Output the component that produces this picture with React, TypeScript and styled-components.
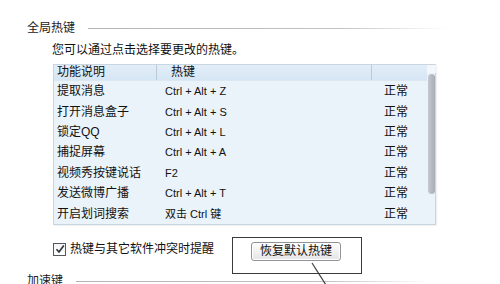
import React from "react";
import styled, { createGlobalStyle } from "styled-components";

const Global = createGlobalStyle`
  html, body { margin: 0; padding: 0; background: #ffffff; }
  body {
    font-family: "Liberation Sans", "Noto Sans CJK SC", sans-serif;
    font-size: 12px;
    color: #111111;
  }
`;

const Page = styled.div`
  position: relative;
  width: 500px;
  height: 284px;
  overflow: hidden;
  background: #ffffff;
  display: flex;
  flex-direction: column;
`;

const SectionHeader = styled.div<{ $top: number }>`
  display: flex;
  align-items: center;
  margin-top: ${(p) => p.$top}px;
  padding-left: 27px;
  height: 14px;
  line-height: 14px;
  flex: none;
`;

const SectionTitle = styled.span<{ $width: number }>`
  width: ${(p) => p.$width}px;
  color: #222222;
  font-size: 12px;
  white-space: nowrap;
  flex: none;
`;

const SectionLine = styled.div<{ $width: number }>`
  width: ${(p) => p.$width}px;
  height: 1px;
  background: linear-gradient(to right, #b4b4b4 0%, #c2c2c2 70%, rgba(210, 210, 210, 0) 100%);
  flex: none;
`;

const Hint = styled.div`
  margin-top: 8px;
  padding-left: 52px;
  height: 14px;
  line-height: 14px;
  font-size: 12px;
  color: #111111;
  flex: none;
`;

const ListBox = styled.div`
  margin-top: 7px;
  margin-left: 53px;
  width: 383px;
  height: 161px;
  box-sizing: border-box;
  border: 1px solid #c8d6e2;
  background: #eaf3fa;
  display: flex;
  flex: none;
  box-shadow: 1px 1px 1px rgba(0, 0, 0, 0.06);
`;

const ListMain = styled.div`
  flex: 1;
  display: flex;
  flex-direction: column;
`;

const Columns = styled.div`
  display: grid;
  grid-template-columns: 103px 215px 55px;
  align-items: center;
`;

const HeaderRow = styled(Columns)`
  height: 15px;
  background: linear-gradient(#e2eef8, #d6e6f4);
  border-bottom: 1px solid #dbe7f1;
`;

const HeaderCell = styled.div<{ $sep?: boolean; $pad: number }>`
  height: 15px;
  line-height: 15px;
  padding-left: ${(p) => p.$pad}px;
  box-sizing: border-box;
  border-right: ${(p) => (p.$sep ? "1px solid #b9cad8" : "none")};
  color: #111111;
  white-space: nowrap;
`;

const Row = styled(Columns)`
  height: 20.57px;
`;

const Cell = styled.div<{ $pad: number; $latin?: boolean }>`
  padding-left: ${(p) => p.$pad}px;
  line-height: 20px;
  white-space: nowrap;
  color: #111111;
  font-size: ${(p) => (p.$latin ? "11px" : "12px")};
`;

const ScrollTrack = styled.div`
  width: 9px;
  display: flex;
  flex-direction: column;
  align-items: center;
  flex: none;
`;

const ScrollCap = styled.div`
  width: 9px;
  height: 8px;
  background: #f3f7fb;
  flex: none;
`;

const ScrollThumb = styled.div`
  margin-top: 1px;
  width: 7px;
  height: 120px;
  border-radius: 4px;
  background: linear-gradient(to right, #c6c9cf, #b3b7bf 60%, #a9adb5);
`;

const Footer = styled.div`
  margin-top: 12px;
  padding-left: 53px;
  height: 37px;
  display: flex;
  align-items: flex-start;
  flex: none;
`;

const CheckLabel = styled.label`
  margin-top: 5px;
  width: 179px;
  display: flex;
  align-items: center;
  gap: 4px;
  height: 14px;
  line-height: 14px;
  font-size: 12px;
  color: #111111;
  white-space: nowrap;
  flex: none;
`;

const CheckBox = styled.span`
  width: 11px;
  height: 11px;
  border: 1px solid #55595f;
  background: linear-gradient(#f4f4f4, #ffffff);
  display: flex;
  align-items: center;
  justify-content: center;
  flex: none;
`;

const Annotation = styled.div`
  width: 130px;
  height: 37px;
  box-sizing: border-box;
  border: 1.5px solid #3a3a3a;
  padding: 4px 0 0 18px;
  flex: none;
`;

const Button = styled.button`
  width: 90px;
  height: 19px;
  padding: 0;
  border: 1px solid #8f9296;
  border-radius: 3px;
  background: linear-gradient(#fefefe, #f0f0f0 55%, #e4e4e4);
  font-family: "Liberation Sans", "Noto Sans CJK SC", sans-serif;
  font-size: 12px;
  color: #111111;
  line-height: 17px;
  box-shadow: inset 0 0 0 1px #ffffff;
`;

const Pointer = styled.svg`
  position: absolute;
  left: 308px;
  top: 260px;
`;

const rows: [string, string][] = [
  ["提取消息", "Ctrl + Alt + Z"],
  ["打开消息盒子", "Ctrl + Alt + S"],
  ["锁定QQ", "Ctrl + Alt + L"],
  ["捕捉屏幕", "Ctrl + Alt + A"],
  ["视频秀按键说话", "F2"],
  ["发送微博广播", "Ctrl + Alt + T"],
  ["开启划词搜索", "双击 Ctrl 键"],
];

export default function App() {
  return (
    <>
      <Global />
      <Page>
        <SectionHeader $top={21}>
          <SectionTitle $width={61}>全局热键</SectionTitle>
          <SectionLine $width={359} />
        </SectionHeader>
        <Hint>您可以通过点击选择要更改的热键。</Hint>
        <ListBox>
          <ListMain>
            <HeaderRow>
              <HeaderCell $sep $pad={3}>功能说明</HeaderCell>
              <HeaderCell $sep $pad={14}>热键</HeaderCell>
              <HeaderCell $pad={0} />
            </HeaderRow>
            {rows.map(([name, key]) => (
              <Row key={name}>
                <Cell $pad={3}>{name}</Cell>
                <Cell $pad={8} $latin>{key}</Cell>
                <Cell $pad={12}>正常</Cell>
              </Row>
            ))}
          </ListMain>
          <ScrollTrack>
            <ScrollCap />
            <ScrollThumb />
          </ScrollTrack>
        </ListBox>
        <Footer>
          <CheckLabel>
            <CheckBox>
              <svg width="10" height="10" viewBox="0 0 10 10">
                <path d="M1.5 5.2 L4 8 L8.8 1.6" fill="none" stroke="#2b2f36" strokeWidth="1.6" />
              </svg>
            </CheckBox>
            热键与其它软件冲突时提醒
          </CheckLabel>
          <Annotation>
            <Button>恢复默认热键</Button>
          </Annotation>
        </Footer>
        <SectionHeader $top={0}>
          <SectionTitle $width={49}>加速键</SectionTitle>
          <SectionLine $width={354} />
        </SectionHeader>
        <Pointer width="24" height="26" viewBox="0 0 24 26">
          <path d="M4 3 L18 25" stroke="#3c3c3c" strokeWidth="1.2" fill="none" />
        </Pointer>
      </Page>
    </>
  );
}
